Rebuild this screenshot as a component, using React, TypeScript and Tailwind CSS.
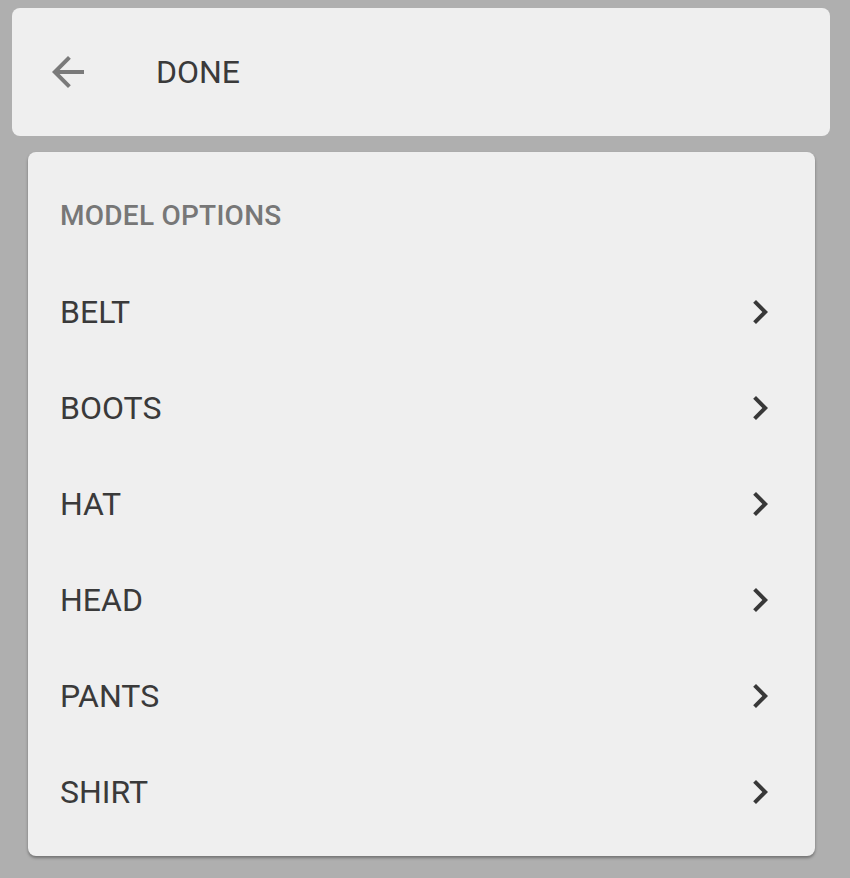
const options = ['BELT', 'BOOTS', 'HAT', 'HEAD', 'PANTS', 'SHIRT'];

function ArrowBack() {
  return (
    <svg viewBox="0 0 24 24" className="w-12 h-12 fill-[#7a7a7a]">
      <path d="M20 11H7.83l5.59-5.59L12 4l-8 8 8 8 1.41-1.41L7.83 13H20v-2z" />
    </svg>
  );
}

function ChevronRight() {
  return (
    <svg viewBox="0 0 24 24" className="w-12 h-12 fill-[#383838]">
      <path d="M10 6L8.59 7.41 13.17 12l-4.58 4.59L10 18l6-6z" />
    </svg>
  );
}

export default function App() {
  return (
    <div className="min-h-[878px] bg-[#afafaf] pt-2 font-['Roboto',sans-serif]">
      {/* Barra superior */}
      <div className="ml-3 mr-5 h-32 bg-[#efefef] rounded-lg flex items-center pl-8">
        <ArrowBack />
        <span className="ml-[64px] text-[32px] text-[#3a3a3a]">DONE</span>
      </div>

      {/* Opções */}
      <div className="ml-7 mr-[35px] mt-4 bg-[#efefef] rounded-lg py-4 shadow-[0_2px_3px_rgba(0,0,0,0.35)]">
        <div className="h-24 flex items-center pl-[32px] text-[28px] font-medium tracking-[0.25px] text-[#777777]">
          MODEL OPTIONS
        </div>
        {options.map((o) => (
          <div key={o} className="h-24 flex items-center justify-between pl-[32px] pr-[31px]">
            <span className="text-[32px] text-[#3a3a3a]">{o}</span>
            <ChevronRight />
          </div>
        ))}
      </div>
    </div>
  );
}
